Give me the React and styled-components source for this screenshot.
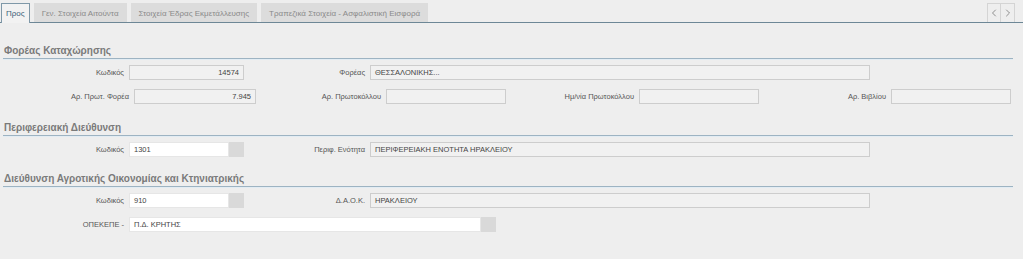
import React from 'react'
import styled, { createGlobalStyle } from 'styled-components'
import { ChevronLeft, ChevronRight } from 'lucide-react'

const GlobalStyle = createGlobalStyle`
  body {
    margin: 0;
    background: #eeeeee;
    font-family: "Liberation Sans", Arial, sans-serif;
  }
`

const Page = styled.div`
  width: 1023px;
  height: 259px;
  background: #eeeeee;
  overflow: hidden;
`

const TabBar = styled.div`
  display: flex;
  align-items: flex-end;
  height: 22px;
  padding: 0 8px 0 1px;
  border-bottom: 1px solid #6d8796;
`

const Tab = styled.div`
  box-sizing: border-box;
  display: flex;
  align-items: center;
  padding: 0 ${p => (p.active ? '4px' : '7px')};
  margin-right: 4px;
  font-size: 8px;
  color: ${p => (p.active ? '#3d6078' : '#8a8a8a')};
  background: ${p => (p.active ? '#f2f2f2' : '#dcdcdc')};
  border: 1px solid ${p => (p.active ? '#7f98a8' : '#dcdcdc')};
  border-bottom: none;
  margin-bottom: ${p => (p.active ? '-1px' : '0')};
  height: ${p => (p.active ? '20px' : '19px')};
`

const Nav = styled.div`
  margin-left: auto;
  display: flex;
  height: 19px;
`

const NavButton = styled.div`
  width: 14px;
  height: 19px;
  box-sizing: border-box;
  border: 1px solid #d4d4d4;
  border-bottom: none;
  display: flex;
  align-items: center;
  justify-content: center;
  color: #666;
  & + & {
    border-left: none;
  }
`

const Content = styled.div`
  padding: 0 10px 0 3px;
`

const Section = styled.div`
  padding-top: ${p => p.top}px;
`

const SectionTitle = styled.div`
  height: 14px;
  line-height: 14px;
  padding-left: 1px;
  font-family: "Liberation Sans", Arial, sans-serif;
  font-size: 10px;
  font-weight: 700;
  color: #7a7a7a;
  border-bottom: 1px solid #9db3c2;
  box-shadow: 0 1px 0 #e2ecf3;
`

const Rows = styled.div`
  display: flex;
  flex-direction: column;
  gap: 9px;
  padding-top: 6px;
  margin-left: -3px;
`

const Row = styled.div`
  display: flex;
  align-items: center;
  height: 15px;
`

const Label = styled.div`
  width: ${p => p.w}px;
  text-align: right;
  font-size: 7.5px;
  color: #555;
  margin-right: 5px;
  white-space: nowrap;
`

const Input = styled.div`
  width: ${p => p.w}px;
  height: 15px;
  box-sizing: border-box;
  display: flex;
  align-items: center;
  justify-content: ${p => (p.right ? 'flex-end' : 'flex-start')};
  padding: 0 4px;
  font-size: 7.5px;
  color: #444;
  background: ${p => (p.editable ? '#ffffff' : '#f1f1f1')};
  border: 1px solid ${p => (p.editable ? '#e6e6e6' : '#cdcdcd')};
  white-space: nowrap;
`

const Lookup = styled.div`
  width: 15px;
  height: 15px;
  background: #d9d9d9;
`

const Field = ({ label, lw, iw, value, right, lookup }) => (
  <>
    <Label w={lw}>{label}</Label>
    <Input w={iw} right={right} editable={lookup}>{value}</Input>
    {lookup && <Lookup />}
  </>
)

const tabs = [
  'Προς',
  'Γεν. Στοιχεία Αιτούντα',
  'Στοιχεία Έδρας Εκμετάλλευσης',
  'Τραπεζικά Στοιχεία - Ασφαλιστική Εισφορά'
]

export default function App () {
  return (
    <Page>
      <GlobalStyle />
      <TabBar>
        {tabs.map((t, i) => (
          <Tab key={t} active={i === 0}>{t}</Tab>
        ))}
        <Nav>
          <NavButton><ChevronLeft size={12} strokeWidth={1.4} /></NavButton>
          <NavButton><ChevronRight size={12} strokeWidth={1.4} /></NavButton>
        </Nav>
      </TabBar>
      <Content>
        <Section top={21}>
          <SectionTitle>Φορέας Καταχώρησης</SectionTitle>
          <Rows>
            <Row>
              <Field label="Κωδικός" lw={124} iw={115} value="14574" right />
              <Field label="Φορέας" lw={121} iw={500} value="ΘΕΣΣΑΛΟΝΙΚΗΣ..." />
            </Row>
            <Row>
              <Field label="Αρ. Πρωτ. Φορέα" lw={129} iw={122} value="7.945" right />
              <Field label="Αρ. Πρωτοκόλλου" lw={125} iw={120} />
              <Field label="Ημ/νία Πρωτοκόλλου" lw={128} iw={120} />
              <Field label="Αρ. Βιβλίου" lw={127} iw={120} />
            </Row>
          </Rows>
        </Section>
        <Section top={17}>
          <SectionTitle>Περιφερειακή Διεύθυνση</SectionTitle>
          <Rows>
            <Row>
              <Field label="Κωδικός" lw={124} iw={100} value="1301" lookup />
              <Field label="Περιφ. Ενότητα" lw={121} iw={500} value="ΠΕΡΙΦΕΡΕΙΑΚΗ ΕΝΟΤΗΤΑ ΗΡΑΚΛΕΙΟΥ" />
            </Row>
          </Rows>
        </Section>
        <Section top={15}>
          <SectionTitle>Διεύθυνση Αγροτικής Οικονομίας και Κτηνιατρικής</SectionTitle>
          <Rows>
            <Row>
              <Field label="Κωδικός" lw={124} iw={100} value="910" lookup />
              <Field label="Δ.Α.Ο.Κ." lw={121} iw={500} value="ΗΡΑΚΛΕΙΟΥ" />
            </Row>
            <Row>
              <Field label="ΟΠΕΚΕΠΕ -" lw={124} iw={352} value="Π.Δ. ΚΡΗΤΗΣ" lookup />
            </Row>
          </Rows>
        </Section>
      </Content>
    </Page>
  )
}
